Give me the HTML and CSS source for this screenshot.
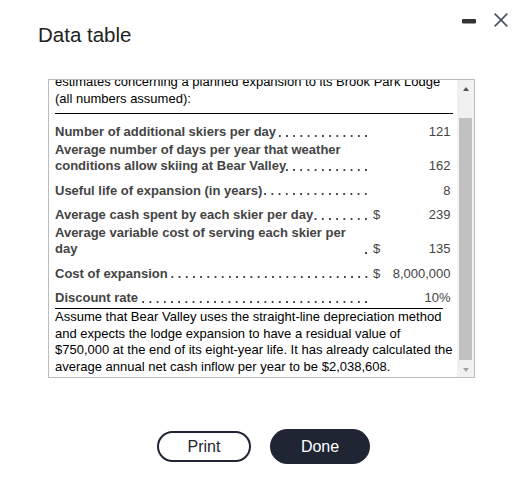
FILE: index.html
```html
<!DOCTYPE html>
<html lang="en">
<head>
<meta charset="utf-8">
<title>Data table</title>
<link rel="stylesheet" href="styles.css">
</head>
<body>
<div class="dialog">
  <header class="head">
    <h1 class="title">Data table</h1>
    <div class="controls">
      <svg class="icon" width="14" height="14" viewBox="0 0 14 14" aria-label="Minimize"><rect x="0" y="6" width="14" height="4.5" rx="1" fill="#333"/></svg>
      <svg class="icon" width="14" height="14" viewBox="0 0 14 14" aria-label="Close"><path d="M0.7 0.7 L13.3 13.3 M13.3 0.7 L0.7 13.3" stroke="#4b5563" stroke-width="1.7" fill="none"/></svg>
    </div>
  </header>

  <div class="box">
    <div class="viewport">
      <div class="content">
        <p class="intro">estimates concerning a planned expansion to its Brook Park Lodge (all numbers assumed):</p>
        <div class="table">
          <div class="row first">
            <div class="lab"><div class="line"><span class="txt">Number of additional skiers per day</span><span class="lead"></span></div></div>
            <div class="cur"></div>
            <div class="val">121</div>
          </div>
          <div class="row tight">
            <div class="lab"><div>Average number of days per year that weather</div><div class="line"><span class="txt">conditions allow skiing at Bear Valley</span><span class="lead"></span></div></div>
            <div class="cur"></div>
            <div class="val">162</div>
          </div>
          <div class="row spaced">
            <div class="lab"><div class="line"><span class="txt">Useful life of expansion (in years)</span><span class="lead"></span></div></div>
            <div class="cur"></div>
            <div class="val">8</div>
          </div>
          <div class="row spaced">
            <div class="lab"><div class="line"><span class="txt">Average cash spent by each skier per day</span><span class="lead"></span></div></div>
            <div class="cur">$</div>
            <div class="val">239</div>
          </div>
          <div class="row tight">
            <div class="lab"><div>Average variable cost of serving each skier per</div><div class="line"><span class="txt">day</span><span class="lead single"></span></div></div>
            <div class="cur">$</div>
            <div class="val">135</div>
          </div>
          <div class="row spaced">
            <div class="lab"><div class="line"><span class="txt">Cost of expansion</span><span class="lead"></span></div></div>
            <div class="cur">$</div>
            <div class="val">8,000,000</div>
          </div>
          <div class="row spaced last">
            <div class="lab"><div class="line"><span class="txt">Discount rate</span><span class="lead"></span></div></div>
            <div class="cur"></div>
            <div class="val">10%</div>
          </div>
        </div>
        <hr class="rule">
        <p class="note">Assume that Bear Valley uses the straight-line depreciation method and expects the lodge expansion to have a residual value of $750,000 at the end of its eight-year life. It has already calculated the average annual net cash inflow per year to be $2,038,608.</p>
      </div>
    </div>
    <div class="scrollbar">
      <div class="sb-btn"><span class="arrow up"></span></div>
      <div class="sb-track"><div class="sb-thumb"></div></div>
      <div class="sb-btn"><span class="arrow down"></span></div>
    </div>
  </div>

  <div class="actions">
    <button class="btn print" type="button">Print</button>
    <button class="btn done" type="button">Done</button>
  </div>
</div>
</body>
</html>
```

FILE: styles.css
```css
* { box-sizing: border-box; }

html, body {
  margin: 0;
  padding: 0;
  background: #fff;
}

body {
  font-family: "Liberation Sans", Arial, sans-serif;
  color: #000;
}

.dialog {
  width: 520px;
  height: 481px;
}

.head {
  display: flex;
  justify-content: space-between;
  align-items: flex-start;
  padding: 13px 12px 0 38px;
}

.title {
  margin: 10px 0 0 0;
  font-size: 20.5px;
  line-height: 23px;
  font-weight: normal;
  color: #222;
}

.controls {
  display: flex;
  align-items: center;
  gap: 18px;
}

.icon {
  display: block;
}

.box {
  margin: 33px 0 0 48px;
  width: 427px;
  height: 299px;
  border: 1px solid #bcbcbc;
  display: flex;
}

.viewport {
  flex: 1;
  min-width: 0;
  overflow: hidden;
  padding: 0 4px 0 6px;
}

.content {
  margin-top: -6px;
  font-size: 13px;
}

.intro {
  margin: 0;
  line-height: 16.67px;
  color: #000;
}

.table {
  margin-top: 5.7px;
  border-top: 1px solid #000;
  color: #444;
}

.row {
  display: grid;
  grid-template-columns: 313px 17px 1fr;
  align-items: end;
  line-height: 16px;
}

.row.first { padding-top: 10px; }
.row.tight { padding-top: 2px; }
.row.spaced { padding-top: 8.5px; }
.row.last { padding-bottom: 2px; }

.lab {
  font-weight: bold;
  min-width: 0;
}

.line {
  display: flex;
  white-space: nowrap;
}

.txt {
  flex: none;
}

.lead {
  flex: 1;
  min-width: 0;
  height: 16px;
  background-image: linear-gradient(to left, #444 2px, transparent 2px);
  background-size: 7.2px 2px;
  background-position: right 1px top 10.6px;
  background-repeat: repeat-x;
}

.lead.single {
  background-repeat: no-repeat;
}

.cur {
  padding-left: 5px;
}

.val {
  text-align: right;
  padding-right: 2.5px;
}

.rule {
  margin: 0 10px 0 0;
  border: 0;
  height: 1px;
  background: #000;
}

.note {
  margin: 0;
  line-height: 16.67px;
  color: #000;
}

.scrollbar {
  width: 17px;
  flex: none;
  background: #f1f1f1;
  display: flex;
  flex-direction: column;
}

.sb-btn {
  height: 17px;
  display: flex;
  align-items: center;
  justify-content: center;
}

.arrow {
  width: 0;
  height: 0;
  border-left: 3.5px solid transparent;
  border-right: 3.5px solid transparent;
}

.arrow.up {
  border-bottom: 4px solid #505050;
  margin-top: 1px;
}

.arrow.down {
  border-top: 4px solid #a3a3a3;
  margin-top: 3px;
}

.sb-track {
  flex: 1;
  display: flex;
  flex-direction: column;
  justify-content: flex-end;
  padding: 0 2px;
}

.sb-thumb {
  height: 242px;
  background: #c1c1c1;
}

.actions {
  display: flex;
  align-items: center;
  gap: 19px;
  margin: 51px 0 0 157px;
}

.btn {
  font-family: "Liberation Sans", Arial, sans-serif;
  font-size: 16px;
  border-radius: 18px;
  padding: 0;
  cursor: pointer;
}

.btn.print {
  width: 94px;
  height: 31px;
  background: #fff;
  color: #1f2533;
  border: 2px solid #1f2533;
}

.btn.done {
  width: 100px;
  height: 35px;
  background: #1f2533;
  color: #fff;
  border: 0;
}
```
